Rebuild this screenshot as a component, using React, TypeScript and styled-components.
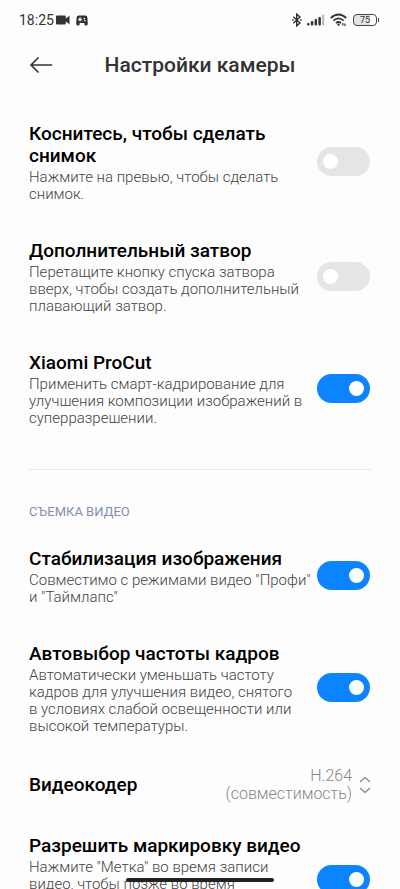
import React, { useId, useState } from "react";
import styled, { createGlobalStyle } from "styled-components";

const GlobalStyle = createGlobalStyle`
  *, *::before, *::after { box-sizing: border-box; }
  body {
    margin: 0;
    background: #fdfdfd;
    color: #000;
    font-family: Roboto, "Noto Sans", sans-serif;
  }
`;

const Screen = styled.div`
  display: flex;
  flex-direction: column;
  height: 100vh;
  overflow: hidden;
`;

const StatusBar = styled.div`
  display: flex;
  flex: none;
  align-items: center;
  justify-content: space-between;
  height: 40px;
  padding: 0 21px 0 19px;
  color: #333;
`;

const StatusGroup = styled.div<{ $gap: number }>`
  display: flex;
  align-items: center;
  gap: ${({ $gap }) => $gap}px;
`;

const Clock = styled.time`
  font-size: 14px;
  line-height: 16px;
`;

const Header = styled.header`
  display: grid;
  flex: none;
  grid-template-columns: 24px 1fr 24px;
  align-items: center;
  height: 50px;
  padding: 0 29px;
`;

const BackButton = styled.button`
  display: flex;
  padding: 0;
  border: 0;
  background: none;
  color: #333;
  cursor: pointer;
`;

const PageTitle = styled.h1`
  margin: 0;
  color: #333;
  font-size: 21px;
  font-weight: 500;
  line-height: 24px;
  text-align: center;
`;

const Settings = styled.main`
  flex: 1;
  min-height: 0;
  padding: 14px 29px 0;
  overflow-y: auto;
  scrollbar-width: none;
`;

const Row = styled.div`
  display: flex;
  align-items: center;
  justify-content: space-between;
  gap: 4px;
  min-height: 63px;
  padding: 18px 0;
`;

const RowText = styled.div`
  flex: 1;
  min-width: 0;
`;

const RowTitle = styled.label`
  display: block;
  padding-top: 1px;
  font-size: 19px;
  font-weight: 500;
  line-height: 22px;
`;

const Description = styled.p<{ $lines: number }>`
  min-height: ${({ $lines }) => $lines * 17}px;
  margin: 2px 0 0;
  color: #444;
  font-size: 15px;
  font-weight: 300;
  line-height: 17px;
  white-space: pre-line;
`;

const Switch = styled.input`
  appearance: none;
  display: flex;
  flex: none;
  align-items: center;
  width: 53px;
  height: 29px;
  margin: 0 1px 2px 0;
  padding: 0 6px;
  border-radius: 15px;
  background: #e5e5e5;
  cursor: pointer;

  &::before {
    content: "";
    width: 15px;
    height: 15px;
    border-radius: 50%;
    background: #fff;
  }

  &:checked {
    justify-content: flex-end;
    background: #0d84ff;
  }
`;

const Divider = styled.hr`
  height: 1px;
  margin: 24px 0 34px;
  border: 0;
  background: #e8e8e8;
`;

const SectionTitle = styled.h2`
  margin: 0 0 9px;
  color: #8390aa;
  font-size: 13px;
  font-weight: 400;
  line-height: 16px;
`;

const Picker = styled.div`
  position: relative;
  display: flex;
  align-items: center;
  gap: 7px;
  width: min-content;
  margin: -5px 0;
  color: #888;
`;

const PickerValue = styled.span`
  font-size: 16px;
  font-weight: 300;
  line-height: 18px;
  text-align: right;
`;

const PickerSelect = styled.select`
  position: absolute;
  inset: 0;
  width: 100%;
  opacity: 0;
  cursor: pointer;
`;

const HomeIndicator = styled.div`
  position: fixed;
  bottom: 7px;
  left: 50%;
  width: 148px;
  height: 4px;
  border-radius: 2px;
  background: #222;
  transform: translateX(-50%);
`;

const VideoIcon = () => (
  <svg width="14" height="10" viewBox="0 0 14 10" fill="currentColor" aria-hidden="true">
    <path d="M1 .5h7.800q1 0 1 1V3.500L13.500 .8v8.400L9.800 6.500v2q0 1-1 1H1q-1 0-1-1v-7q0-1 1-1z" />
  </svg>
);

const GamepadIcon = () => (
  <svg width="12" height="11" viewBox="0 0 12 11" aria-hidden="true">
    <path
      fill="currentColor"
      fillRule="evenodd"
      d="M2.800 .5h6.400q2 0 2.200 2l.4 6.300q0 1.700-1.500 1.700h-.8q-1 0-1.100-1.200L8.300 7.900H3.700l-.1 1.400q-.1 1.200-1.100 1.200h-.8Q.2 10.500.2 8.800l.4-6.300q.2-2 2.200-2zM3.400 2.600v1.100H2.300v1.500h1.100v1.100h1.400V5.200h1V3.700h-1V2.600zM8.300 2.700a.8.800 0 1 0 0 1.600.8.800 0 0 0 0-1.600zM8.800 4.800a.8.800 0 1 0 0 1.600.8.800 0 0 0 0-1.600z"
    />
  </svg>
);

const BluetoothIcon = () => (
  <svg width="10" height="14" viewBox="0 0 10 14" fill="none" stroke="currentColor" strokeWidth="1.400" aria-hidden="true">
    <path d="M1.300 3.800l6.700 6.200-3.300 2.900V1.100L8 4l-6.700 6.200" />
    <path d="M.2 7h1.500M8.200 7h1.500" />
  </svg>
);

const SignalIcon = () => (
  <svg width="18" height="12" viewBox="0 0 18 12" fill="currentColor" aria-hidden="true">
    <rect x="0" y="9" width="2.500" height="2.500" rx="1" />
    <rect x="3.800" y="7" width="2.500" height="4.500" rx="1" />
    <rect x="7.600" y="5" width="2.500" height="6.500" rx="1" />
    <rect x="11.400" y="3" width="2.500" height="8.500" rx="1" />
    <rect x="15.200" y=".5" width="2" height="11" rx="1" opacity=".35" />
  </svg>
);

const WifiIcon = () => (
  <svg width="18" height="14" viewBox="0 0 18 14" fill="none" stroke="currentColor" strokeWidth="1.700" aria-hidden="true">
    <path d="M.8 5Q8.500-2 16.200 5M3.400 7.700q5.100-4.600 10.200 0M6 10q2.500-2 5 0" />
    <circle cx="8.500" cy="11.600" r="1.200" fill="currentColor" stroke="none" />
    <path d="M12.800 10v2.500M15 10.500v2.500" strokeWidth="1.200" />
  </svg>
);

const Battery = styled.div`
  display: flex;
  align-items: center;
  gap: 1px;

  &::after {
    content: "";
    width: 1px;
    height: 4px;
    background: #444;
  }
`;

const BatteryLevel = styled.span`
  width: 24px;
  height: 12px;
  border: 1px solid #444;
  border-radius: 4px;
  background: linear-gradient(to right, #e4e4e4 75%, #fdfdfd 75%);
  font-size: 9px;
  line-height: 10px;
  text-align: center;
`;

const BackIcon = () => (
  <svg width="24" height="16" viewBox="0 0 24 16" fill="none" stroke="currentColor" strokeWidth="1.700" strokeLinecap="round" strokeLinejoin="round" aria-hidden="true">
    <path d="M22.500 8H2M9 1L2 8l7 7" />
  </svg>
);

const Chevrons = styled.svg`
  flex: none;
`;

const UpDownIcon = () => (
  <Chevrons width="12" height="18" viewBox="0 0 12 18" fill="none" stroke="currentColor" strokeWidth="1.300" strokeLinecap="round" strokeLinejoin="round" aria-hidden="true">
    <path d="M1.500 5.500L6 1.500l4.500 4M1.500 12.500l4.500 4 4.500-4" />
  </Chevrons>
);

type ToggleProps = { title: string; description: string; on?: boolean; lines?: number };

function ToggleSetting({ title, description, on = false, lines = 1 }: ToggleProps) {
  const id = useId();
  const [checked, setChecked] = useState(on);
  return (
    <Row>
      <RowText>
        <RowTitle htmlFor={id}>{title}</RowTitle>
        <Description id={`${id}-text`} $lines={lines}>
          {description}
        </Description>
      </RowText>
      <Switch
        id={id}
        type="checkbox"
        role="switch"
        aria-describedby={`${id}-text`}
        checked={checked}
        onChange={(event) => setChecked(event.target.checked)}
      />
    </Row>
  );
}

const codecs = ["H.264 (совместимость)", "H.265"];

function CodecSetting() {
  const id = useId();
  const [codec, setCodec] = useState(codecs[0]);
  return (
    <Row>
      <RowTitle htmlFor={id}>Видеокодер</RowTitle>
      <Picker>
        <PickerValue aria-hidden="true">{codec}</PickerValue>
        <UpDownIcon />
        <PickerSelect id={id} value={codec} onChange={(event) => setCodec(event.target.value)}>
          {codecs.map((name) => (
            <option key={name}>{name}</option>
          ))}
        </PickerSelect>
      </Picker>
    </Row>
  );
}

export default function App() {
  return (
    <Screen>
      <GlobalStyle />
      <StatusBar>
        <StatusGroup $gap={2}>
          <Clock>18:25</Clock>
          <StatusGroup $gap={6}>
            <VideoIcon />
            <GamepadIcon />
          </StatusGroup>
        </StatusGroup>
        <StatusGroup $gap={5}>
          <BluetoothIcon />
          <SignalIcon />
          <WifiIcon />
          <Battery>
            <BatteryLevel>75</BatteryLevel>
          </Battery>
        </StatusGroup>
      </StatusBar>
      <Header>
        <BackButton type="button" aria-label="Назад">
          <BackIcon />
        </BackButton>
        <PageTitle>Настройки камеры</PageTitle>
      </Header>
      <Settings>
        <ToggleSetting title="Коснитесь, чтобы сделать снимок" description={"Нажмите на превью, чтобы сделать\nснимок."} />
        <ToggleSetting
          title="Дополнительный затвор"
          description={"Перетащите кнопку спуска затвора\nвверх, чтобы создать дополнительный\nплавающий затвор."}
        />
        <ToggleSetting
          title="Xiaomi ProCut"
          description={"Применить смарт-кадрирование для\nулучшения композиции изображений в\nсуперразрешении."}
          on
        />
        <Divider />
        <SectionTitle>СЪЕМКА ВИДЕО</SectionTitle>
        <ToggleSetting title="Стабилизация изображения" description={'Совместимо с режимами видео "Профи"\nи "Таймлапс"'} on />
        <ToggleSetting
          title="Автовыбор частоты кадров"
          description={"Автоматически уменьшать частоту\nкадров для улучшения видео, снятого\nв условиях слабой освещенности или\nвысокой температуры."}
          on
        />
        <CodecSetting />
        <ToggleSetting
          title="Разрешить маркировку видео"
          description={'Нажмите "Метка" во время записи\nвидео, чтобы позже во время'}
          lines={4}
          on
        />
      </Settings>
      <HomeIndicator />
    </Screen>
  );
}
